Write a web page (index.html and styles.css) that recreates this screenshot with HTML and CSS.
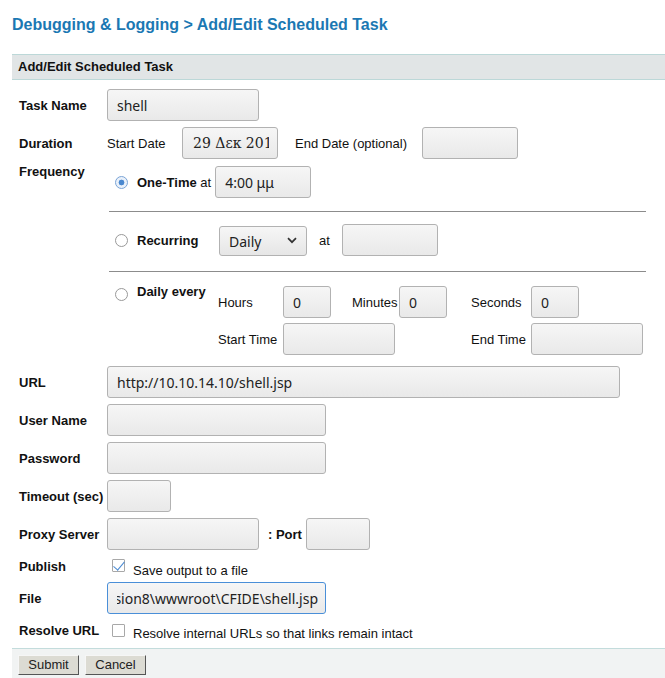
FILE: index.html
```html
<!DOCTYPE html>
<html lang="en">
<head>
<meta charset="utf-8">
<title>Add/Edit Scheduled Task</title>
<link rel="stylesheet" href="styles.css">
</head>
<body>
<div class="page">
  <h1 class="title">Debugging &amp; Logging &gt; Add/Edit Scheduled Task</h1>
  <div class="panel-head">Add/Edit Scheduled Task</div>
  <form class="form">
    <div class="lbl">Task Name</div>
    <div class="fld"><input class="inp w152" type="text" value="shell"></div>

    <div class="lbl">Duration</div>
    <div class="fld">
      <span class="sublbl start-date">Start Date</span>
      <input class="inp w96 serif" type="text" value="29 Δεκ 2017">
      <span class="sublbl end-date">End Date (optional)</span>
      <input class="inp w96" type="text" value="">
    </div>

    <div class="lbl lbl-top">Frequency</div>
    <div class="freq">
      <div class="opt-row first">
        <input class="radio" type="radio" name="freq" checked>
        <span class="opt-name"><b>One-Time</b> at</span>
        <input class="inp w96 at-inp" type="text" value="4:00 μμ">
      </div>
      <div class="sep sep1"></div>
      <div class="opt-row">
        <input class="radio" type="radio" name="freq">
        <span class="opt-name rec"><b>Recurring</b></span>
        <span class="select-wrap">
          <select class="sel"><option>Daily</option><option>Weekly</option><option>Monthly</option></select>
          <svg class="chev" width="10" height="7" viewBox="0 0 10 7"><path d="M1 1.2 L5 5.2 L9 1.2" fill="none" stroke="#333" stroke-width="1.7"/></svg>
        </span>
        <span class="at">at</span>
        <input class="inp w96" type="text" value="">
      </div>
      <div class="sep sep2"></div>
      <div class="daily">
        <input class="radio daily-radio" type="radio" name="freq">
        <span class="opt-name daily-name"><b>Daily every</b></span>
        <div class="dgrid">
          <span class="sublbl">Hours</span>
          <input class="inp w48" type="text" value="0">
          <span class="sublbl">Minutes</span>
          <input class="inp w48" type="text" value="0">
          <span class="sublbl">Seconds</span>
          <input class="inp w48" type="text" value="0">
          <span class="sublbl">Start Time</span>
          <input class="inp w112 span2" type="text" value="">
          <span class="sublbl col5">End Time</span>
          <input class="inp w112" type="text" value="">
        </div>
      </div>
    </div>

    <div class="lbl">URL</div>
    <div class="fld"><input class="inp w513" type="text" value="http://10.10.14.10/shell.jsp"></div>

    <div class="lbl">User Name</div>
    <div class="fld"><input class="inp w219" type="text" value=""></div>

    <div class="lbl">Password</div>
    <div class="fld"><input class="inp w219" type="password" value=""></div>

    <div class="lbl">Timeout (sec)</div>
    <div class="fld"><input class="inp w64" type="text" value=""></div>

    <div class="lbl">Proxy Server</div>
    <div class="fld">
      <input class="inp w152" type="text" value="">
      <b class="port">: Port</b>
      <input class="inp w64" type="text" value="">
    </div>

    <div class="lbl">Publish</div>
    <div class="chk-row">
      <input class="chk" type="checkbox" checked>
      <span class="chk-text">Save output to a file</span>
    </div>

    <div class="lbl">File</div>
    <div class="fld"><input class="inp w219 focus" type="text" dir="rtl" value="C:\ColdFusion8\wwwroot\CFIDE\shell.jsp"></div>

    <div class="lbl">Resolve URL</div>
    <div class="chk-row chk-row2">
      <input class="chk" type="checkbox">
      <span class="chk-text">Resolve internal URLs so that links remain intact</span>
    </div>
  </form>
  <div class="footer">
    <button class="btn" type="button">Submit</button>
    <button class="btn" type="button">Cancel</button>
  </div>
</div>
</body>
</html>
```
FILE: styles.css
```css
* { box-sizing: border-box; }
html, body { margin: 0; padding: 0; background: #fff; }
body {
  font-family: "Liberation Sans", Arial, sans-serif;
  font-size: 13px;
  color: #111;
  overflow: hidden;
}
.page { padding-left: 12px; }

.title {
  margin: 0;
  padding-top: 16px;
  height: 54px;
  font-size: 16px;
  line-height: 18px;
  font-weight: bold;
  color: #1b78b3;
}

.panel-head {
  height: 26px;
  border-top: 1px solid #bcd8d8;
  border-bottom: 1px solid #bcd8d8;
  background: #e1e5e6;
  padding-left: 6px;
  font-weight: bold;
  line-height: 24px;
}

.form {
  display: grid;
  grid-template-columns: 88px 1fr;
  row-gap: 6px;
  align-items: center;
  padding: 9px 0 0 7px;
}
.lbl { font-weight: bold; line-height: 15px; }
.lbl-top { align-self: start; margin-top: -1px; }
.fld { display: flex; align-items: center; }

.inp {
  height: 32px;
  border: 1px solid #b2b2b2;
  border-radius: 3px;
  background: linear-gradient(to bottom, #f6f6f6, #e9e9e9);
  font-family: "Noto Sans", "Open Sans", sans-serif;
  font-size: 14px;
  color: #222;
  padding: 0 8px 0 9px;
  margin: 0;
  outline: none;
}
.inp.serif { font-family: "DejaVu Serif", "Liberation Serif", serif; font-size: 14px; padding-left: 10px; }
.inp.focus { border-color: #4a8fd8; padding-right: 7px; }
.w48 { width: 48px; }
.w64 { width: 64px; }
.w96 { width: 96px; }
.w112 { width: 112px; }
.w152 { width: 152px; }
.w219 { width: 219px; }
.w513 { width: 513px; }

.sublbl { line-height: 15px; }
.start-date { width: 75px; }
.end-date { margin-left: 17px; width: 127px; }

.freq { display: flex; flex-direction: column; margin-bottom: 5px; }
.opt-row { display: flex; align-items: center; height: 32px; }
.opt-row.first { margin-top: 1px; }
.sep { width: 537px; height: 1px; background: #8c8c8c; margin-left: 2px; }
.sep1 { margin-top: 13px; margin-bottom: 12px; }
.sep2 { margin-top: 15px; margin-bottom: 14px; }

.radio {
  -webkit-appearance: none;
  appearance: none;
  width: 13px;
  height: 13px;
  margin: 0 9px 0 8px;
  border: 1px solid #999;
  border-radius: 50%;
  background: #fff;
  flex: none;
}
.radio:checked {
  border-color: #7aa4d6;
  background: radial-gradient(circle, #4a88cf 0, #4a88cf 2.6px, #eaf1fa 3.2px);
}
.opt-name { line-height: 15px; }
.at-inp { margin-left: 4px; }
.rec { width: 82px; }

.select-wrap { position: relative; display: inline-block; margin-top: 2px; }
.sel {
  -webkit-appearance: none;
  appearance: none;
  width: 88px;
  height: 30px;
  border: 1px solid #b2b2b2;
  border-radius: 3px;
  background: linear-gradient(to bottom, #f6f6f6, #e6e6e6);
  font-family: "Noto Sans", "Open Sans", sans-serif;
  font-size: 14px;
  color: #222;
  padding: 0 0 0 9px;
  margin: 0;
  outline: none;
  display: block;
}
.chev { position: absolute; right: 10px; top: 11px; pointer-events: none; }
.at { margin-left: 12px; margin-right: 12px; }

.daily { display: flex; align-items: flex-start; }
.daily-radio { margin-top: 2px; }
.daily-name { width: 81px; margin-top: -2px; }
.dgrid {
  display: grid;
  grid-template-columns: 65px 69px 47px 72px 60px auto;
  grid-template-rows: 32px 32px;
  row-gap: 5px;
  align-items: center;
}
.span2 { grid-column: span 2; }
.col5 { grid-column: 5; }

.port { margin-left: 9px; margin-right: 4px; }

.chk-row { display: flex; align-items: flex-start; height: 20px; }
.chk {
  -webkit-appearance: none;
  appearance: none;
  position: relative;
  width: 13px;
  height: 13px;
  margin: 3px 8px 0 5px;
  border: 1px solid #a8a8a8;
  border-radius: 1px;
  background: #fff;
  flex: none;
}
.chk:checked::after {
  content: "";
  position: absolute;
  left: 3px;
  top: -1px;
  width: 5px;
  height: 10px;
  border-right: 1.3px solid #4a8ad2;
  border-bottom: 1.3px solid #4a8ad2;
  transform: rotate(40deg);
}
.chk-text { margin-top: 7px; line-height: 15px; }
.chk-row2 .chk { margin-top: 4px; }
.chk-row2 .chk-text { margin-top: 6px; }

.footer {
  margin-top: 8px;
  border-top: 1px solid #c3dcdc;
  background: #f1f3f3;
  height: 40px;
  padding: 6px 0 0 6px;
  display: flex;
  gap: 6px;
  align-items: flex-start;
}
.btn {
  width: 61px;
  height: 20px;
  padding: 0;
  margin: 0;
  background: #dcdbd3;
  border: 1px solid;
  border-color: #f6f6f6 #555 #555 #f6f6f6;
  border-radius: 0;
  font-family: "Liberation Sans", Arial, sans-serif;
  font-size: 13px;
  color: #222;
  line-height: 18px;
}
```
